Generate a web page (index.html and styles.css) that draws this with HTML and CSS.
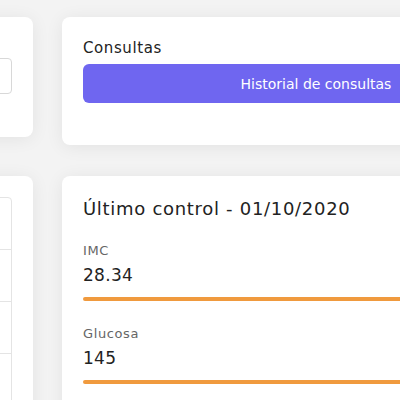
FILE: index.html
```html
<!DOCTYPE html>
<html lang="es">
<head>
    <meta charset="UTF-8">
    <title>Panel del paciente</title>
    <link rel="stylesheet" href="styles.css">
</head>
<body>
    <div class="dashboard">
        <div class="card side-card">
            <div class="search-box"></div>
        </div>
        <div class="card consult-card">
            <h2>Consultas</h2>
            <button class="btn-primary">Historial de consultas</button>
        </div>
        <div class="card side-card tall">
            <div class="table-box">
                <div class="table-row"></div>
                <div class="table-row"></div>
                <div class="table-row"></div>
                <div class="table-row"></div>
            </div>
        </div>
        <div class="card control-card">
            <h1>Último control - 01/10/2020</h1>
            <div class="metric">
                <span class="metric-label">IMC</span>
                <span class="metric-value">28.34</span>
                <div class="metric-bar"></div>
            </div>
            <div class="metric">
                <span class="metric-label">Glucosa</span>
                <span class="metric-value">145</span>
                <div class="metric-bar"></div>
            </div>
        </div>
    </div>
</body>
</html>
```

FILE: styles.css
```css
body {
    margin: 0;
    padding: 0;
    background-color: #f3f3f3;
    font-family: "DejaVu Sans", Arial, sans-serif;
    color: #222;
    overflow: hidden;
    height: 400px;
}
.dashboard {
    display: grid;
    grid-template-columns: 300px 500px;
    column-gap: 29px;
    row-gap: 31px;
    margin-left: -267px;
    padding-top: 17px;
    align-items: start;
}
.card {
    background-color: #fff;
    border-radius: 8px;
    box-shadow: 0 2px 18px rgba(0, 0, 0, 0.07);
}
.side-card {
    height: 120px;
    padding: 20px 21px 0 0;
    box-sizing: border-box;
}
.side-card.tall {
    height: 300px;
}
.search-box {
    margin-top: 21px;
    height: 36px;
    border: 1px solid #d8d8d8;
    border-radius: 4px;
    box-sizing: border-box;
}
.table-box {
    margin-top: 1px;
    border: 1px solid #e4e4e4;
    border-radius: 4px;
    height: 260px;
}
.table-row {
    height: 51px;
    border-bottom: 1px solid #e4e4e4;
}
.consult-card {
    height: 128px;
    padding: 21px 21px;
    box-sizing: border-box;
}
.consult-card h2 {
    margin: 0 0 5px;
    font-size: 15px;
    font-weight: 400;
    letter-spacing: 0.6px;
    line-height: 21px;
}
.btn-primary {
    width: 466px;
    height: 39px;
    border: none;
    border-radius: 6px;
    background-color: #6f66f0;
    color: #fff;
    font-family: inherit;
    font-size: 14px;
}
.control-card {
    height: 300px;
    padding: 21px 21px;
    box-sizing: border-box;
}
.control-card h1 {
    margin: 0 0 21px;
    font-size: 18px;
    font-weight: 400;
    letter-spacing: 0.7px;
    line-height: 24px;
}
.metric {
    display: flex;
    flex-direction: column;
    margin-bottom: 24px;
}
.metric-label {
    font-size: 13px;
    color: #666;
    letter-spacing: 0.6px;
    line-height: 18px;
}
.metric-value {
    font-size: 17px;
    letter-spacing: 0.3px;
    line-height: 24px;
    margin-top: 3px;
}
.metric-bar {
    margin-top: 10px;
    height: 4px;
    border-radius: 2px;
    background-color: #f09a3e;
}
```
